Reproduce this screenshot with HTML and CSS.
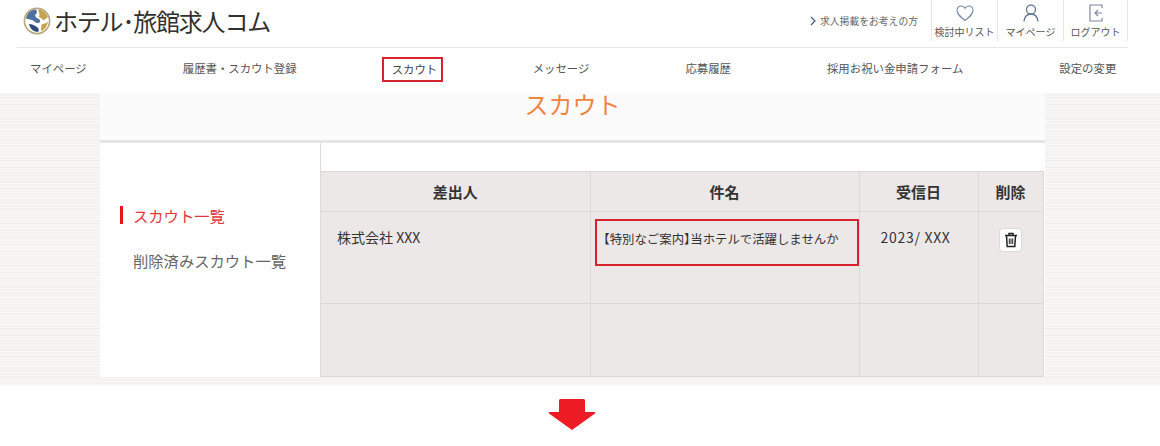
FILE: index.html
```html
<!DOCTYPE html>
<html lang="ja">
<head>
<meta charset="utf-8">
<title>スカウト</title>
<link rel="stylesheet" href="styles.css">
</head>
<body>
<header class="header">
  <div class="top">
    <div class="logo">
      <svg class="logo-mark" viewBox="0 0 28 28" width="28" height="28">
        <circle cx="14" cy="14" r="12.6" fill="#fff" stroke="#b9a77c" stroke-width="1.6"/>
        <path d="M3 12C4 6 8 2.500 13 2.500c1.500 2 1 4.500-1 5.500 0 2 2 3 4 4 2 2 1 4-1 4-4 0-4-3-6-3-1 0-3-1-6-1.500z" fill="#4f6f9f"/>
        <path d="M15 2.500c4 0 8 3 10 7.500-2 1-3 3-5 3-1-2-3-2-4-3 1-2 0-5-1-7.500z" fill="#c6a24e"/>
        <path d="M6 17c3 0 7 2 9 4 1 1 1 3 0 4-4 0-8-3-9-8z" fill="#2f4a78"/>
        <path d="M19 17c2 0 4-1 6-2-1 4-3 8-7 9 0-2 0-5 1-7z" fill="#c6a24e"/>
      </svg>
      <span class="logo-text">ホテル･旅館求人コム</span>
    </div>
    <div class="top-right">
      <a class="employer"><svg class="chev" viewBox="0 0 6 10" width="6" height="10"><path d="M1 1l4 4-4 4" fill="none" stroke="#4a5a78" stroke-width="1.2"/></svg>求人掲載をお考えの方</a>
      <a class="tool">
        <svg viewBox="0 0 20 20" width="20" height="20"><path d="M10 17.5C5 13.5 2 11 2 7.3 2 4.8 4 3 6.200 3 7.800 3 9.200 3.900 10 5.300 10.800 3.900 12.200 3 13.800 3 16 3 18 4.800 18 7.300 18 11 15 13.500 10 17.500z" fill="none" stroke="#7a88a8" stroke-width="1.100"/></svg>
        <span>検討中リスト</span>
      </a>
      <a class="tool">
        <svg viewBox="0 0 20 20" width="20" height="20"><circle cx="10" cy="6.500" r="4.500" fill="none" stroke="#66789c" stroke-width="1.300"/><path d="M3 18.500c.5-4.500 3-7.500 7-7.500s6.500 3 7 7.500" fill="none" stroke="#66789c" stroke-width="1.300"/></svg>
        <span>マイページ</span>
      </a>
      <a class="tool">
        <svg viewBox="0 0 20 20" width="20" height="20"><path d="M16 5V2H4v16h12v-3" fill="none" stroke="#7a88a8" stroke-width="1.200"/><path d="M16 10H9M12 7l-3 3 3 3" fill="none" stroke="#7a88a8" stroke-width="1.200"/></svg>
        <span>ログアウト</span>
      </a>
    </div>
  </div>
  <nav class="nav">
    <a class="nav-item">マイページ</a>
    <a class="nav-item">履歴書・スカウト登録</a>
    <a class="nav-item nav-active">スカウト</a>
    <a class="nav-item">メッセージ</a>
    <a class="nav-item">応募履歴</a>
    <a class="nav-item">採用お祝い金申請フォーム</a>
    <a class="nav-item">設定の変更</a>
  </nav>
</header>
<main class="main">
  <div class="container">
    <h1 class="title">スカウト</h1>
    <div class="content">
      <aside class="side">
        <a class="side-item side-current">スカウト一覧</a>
        <a class="side-item">削除済みスカウト一覧</a>
      </aside>
      <section class="list">
        <table class="table">
          <colgroup><col class="c1"><col class="c2"><col class="c3"><col class="c4"></colgroup>
          <thead>
            <tr><th>差出人</th><th>件名</th><th>受信日</th><th>削除</th></tr>
          </thead>
          <tbody>
            <tr class="row-a">
              <td class="sender">株式会社 XXX</td>
              <td class="subject-cell"><div class="subject"><span class="br">【</span>特別なご案内<span class="br">】</span>当ホテルで活躍しませんか</div></td>
              <td class="date">2023/ XXX</td>
              <td class="del">
                <button class="trash" type="button" aria-label="削除">
                  <svg viewBox="0 0 14 16" width="14" height="16"><path d="M1 3.500h12M5 3.200V1.500h4v1.700M2.500 3.500l.7 11h7.600l.7-11" fill="none" stroke="#222" stroke-width="1.500"/><path d="M5.300 6.500v5.500M7 6.500v5.500M8.700 6.500v5.500" stroke="#222" stroke-width="1"/></svg>
                </button>
              </td>
            </tr>
            <tr class="row-b"><td></td><td></td><td></td><td></td></tr>
          </tbody>
        </table>
      </section>
    </div>
  </div>
</main>
<div class="next">
  <svg viewBox="0 0 48 32" width="48" height="32"><path d="M11 1.500Q11 0 12.500 0h23Q37 0 37 1.500V13h9.500Q48 13 47 14.500L24 31 1 14.500Q0 13 1.500 13H11z" fill="#ed1c24"/></svg>
</div>
</body>
</html>
```

FILE: styles.css
```css
* { box-sizing: border-box; }
html, body { margin: 0; padding: 0; }
body {
  width: 1160px;
  height: 446px;
  overflow: hidden;
  background: #fff;
  font-family: "Noto Sans CJK JP", "Noto Sans", sans-serif;
  color: #333;
}
a { color: inherit; text-decoration: none; }

.header { height: 93px; background: #fff; }
.top {
  width: 1111px;
  height: 48px;
  margin-left: 17px;
  padding-left: 6px;
  border-bottom: 1px solid #e6e6e6;
  display: flex;
  justify-content: space-between;
}
.logo { display: flex; align-items: center; gap: 3px; height: 42px; }
.logo-mark { flex: none; }
.logo-text {
  font-size: 24px;
  line-height: 1;
  color: #33302e;
  letter-spacing: -1.200px;
}
.top-right { display: flex; align-items: flex-start; height: 41px; }
.employer {
  display: flex;
  align-items: center;
  gap: 4px;
  height: 41px;
  margin-right: 13px;
  font-size: 9.800px;
  color: #666;
}
.chev { flex: none; }
.tool {
  width: 66px;
  height: 41px;
  padding-top: 3px;
  display: flex;
  flex-direction: column;
  align-items: center;
  border-left: 1px solid #e6e6e6;
  font-size: 10px;
  line-height: 14px;
  color: #555;
  white-space: nowrap;
}
.tool:last-child { border-right: 1px solid #e6e6e6; width: 65px; }
.tool svg { display: block; height: 20px; margin-bottom: 2px; }

.nav {
  display: flex;
  gap: 96px;
  align-items: center;
  height: 45px;
  padding: 0 0 5px 30px;
  font-size: 11.400px;
  color: #555;
}
.nav-item { line-height: 18px; white-space: nowrap; flex: none; }
.nav-active {
  border: 2px solid #d8232f;
  padding: 1px 0 0 8px;
  height: 25px;
  width: 61px;
  color: #444;
  margin: 3px -6px 0 -11px;
}

.main {
  height: 292px;
  background-color: #f4f3f2;
  background-image:
    repeating-linear-gradient(0deg, rgba(255,255,255,.45) 0 1px, transparent 1px 3px),
    repeating-linear-gradient(0deg, rgba(0,0,0,.018) 0 1px, transparent 1px 7px);
}
.container { width: 945px; height: 284px; margin-left: 100px; background: #fff; }
.title {
  margin: 0;
  height: 50px;
  background: #fbfbfb;
  border-bottom: 3px solid #e5e5e5;
  text-align: center;
  font-size: 24px;
  font-weight: 400;
  line-height: 21px;
  color: #f0843f;
}
.content { display: flex; height: 234px; }
.side {
  width: 221px;
  padding: 63px 0 0 20px;
  border-right: 1px solid #dcdcdc;
  display: flex;
  flex-direction: column;
  gap: 27px;
}
.side-item {
  display: block;
  padding-left: 10px;
  border-left: 3px solid transparent;
  font-size: 15.300px;
  line-height: 18px;
  height: 18px;
  color: #666;
  white-space: nowrap;
}
.side-current { border-left-color: #e8141c; color: #e3353c; }

.list { width: 723px; padding-top: 28px; }
.table {
  width: 722px;
  table-layout: fixed;
  border-collapse: collapse;
  background: #ece8e7;
}
.c1 { width: 269px; }
.c2 { width: 269px; }
.c3 { width: 119px; }
.c4 { width: 65px; }
.table th, .table td { border: 1px solid #dbd8d6; padding: 0; }
.table th:first-child, .table td:first-child { border-left: 0; }
.table th {
  height: 40px;
  font-size: 15px;
  font-weight: 700;
  color: #333;
  text-align: center;
}
.table td { vertical-align: top; font-size: 14px; line-height: 18px; color: #333; }
.row-a td { height: 92px; }
.row-b td { height: 73px; }
.sender { padding: 16px 0 0 16px !important; }
.subject-cell { padding: 7px 0 0 4px !important; }
.subject {
  width: 264px;
  height: 47px;
  border: 2px solid #d8232f;
  padding: 9px 0 0 7px;
  font-size: 12.400px;
  white-space: nowrap;
}
.br { font-feature-settings: "halt"; }
.date { padding: 16px 0 0 21px !important; letter-spacing: .7px; }
.del { text-align: center; padding-top: 16px !important; }
.trash {
  width: 23px;
  height: 24px;
  padding: 0;
  border: 1px solid #dcd9d7;
  border-radius: 4px;
  background: #fff;
  display: inline-flex;
  align-items: center;
  justify-content: center;
}
.next { display: flex; justify-content: center; padding: 14px 16px 0 0; }
.next svg { display: block; margin-left: -1px; }
```
